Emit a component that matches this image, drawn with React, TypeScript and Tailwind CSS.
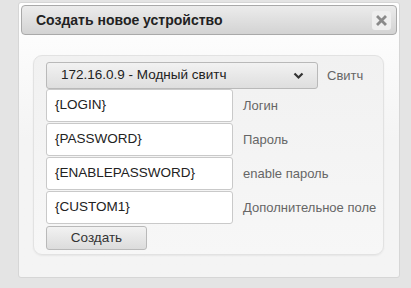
import React from 'react';

const fields = [
  { value: '{LOGIN}', label: 'Логин' },
  { value: '{PASSWORD}', label: 'Пароль' },
  { value: '{ENABLEPASSWORD}', label: 'enable пароль' },
  { value: '{CUSTOM1}', label: 'Дополнительное поле' },
];

const App: React.FC = () => {
  return (
    <div className="w-[411px] h-[288px] bg-[#e4e4e4] pl-[18px] pt-[2px] font-['Liberation_Sans',Arial,sans-serif] overflow-hidden">
      <div className="w-[382px] h-[276px] bg-gradient-to-b from-[#ffffff] via-[#f4f4f4] to-[#f4f4f4] border border-[#d6d6d6] rounded-[3px] p-[2px]">
        <div className="h-[30px] flex items-center justify-between pl-[14px] pr-[5px] rounded-[4px] border border-[#a9a9a9] bg-gradient-to-b from-[#ececec] to-[#d3d3d3]">
          <span className="text-[14px] font-bold text-[#222]">Создать новое устройство</span>
          <button className="w-[19px] h-[19px] rounded-[3px] bg-[#efefef] flex items-center justify-center">
            <svg width="11" height="11" viewBox="0 0 11 11">
              <path d="M2 2 L9 9 M9 2 L2 9" stroke="#8a8a8a" strokeWidth="2.8" strokeLinecap="square" />
            </svg>
          </button>
        </div>

        <div className="mt-[20px] ml-[12px] w-[351px] h-[200px] rounded-[9px] border border-[#e2e2e2] bg-gradient-to-b from-[#f1f1f1] to-[#f7f7f7] shadow-[0_1px_2px_rgba(0,0,0,0.06)] pl-[12px] pt-[6px]">
          <div className="flex items-center">
            <div className="w-[272px] h-[27px] flex items-center justify-between pl-[14px] pr-[13px] rounded-[3px] border border-[#b9b9b9] bg-gradient-to-b from-[#f2f2f2] to-[#dedede] text-[13.5px] text-[#222]">
              <span>172.16.0.9 - Модный свитч</span>
              <svg width="11" height="8" viewBox="0 0 11 8">
                <path d="M1.5 1.5 L5.5 5.5 L9.5 1.5" stroke="#333" strokeWidth="2.2" fill="none" />
              </svg>
            </div>
            <span className="ml-[9px] text-[13px] text-[#666]">Свитч</span>
          </div>

          {fields.map((f) => (
            <div key={f.value} className="flex items-center mb-[1px]">
              <div className="w-[187px] h-[33px] flex items-center pl-[8px] bg-white border border-[#c9c9c9] rounded-[3px] text-[13.5px] text-[#222]">
                {f.value}
              </div>
              <span className="ml-[10px] text-[13px] text-[#666]">{f.label}</span>
            </div>
          ))}

          <button className="w-[101px] h-[24px] rounded-[3px] border border-[#b9b9b9] bg-gradient-to-b from-[#f2f2f2] to-[#dcdcdc] text-[13.5px] text-[#333]">
            Создать
          </button>
        </div>
      </div>
    </div>
  );
};

export default App;
